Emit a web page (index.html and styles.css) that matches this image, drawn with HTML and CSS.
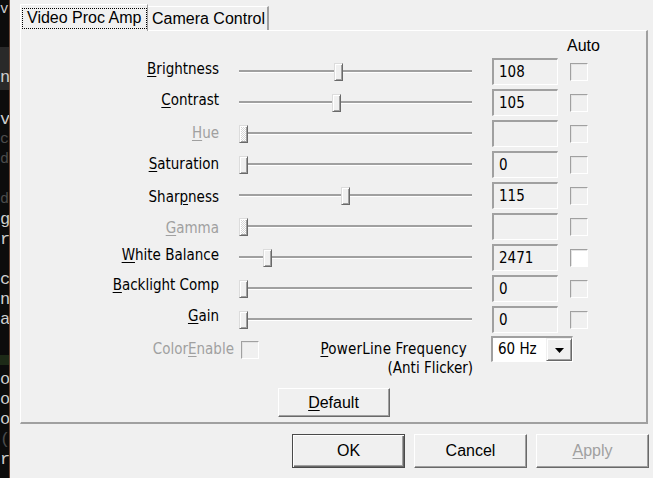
FILE: index.html
```html
<!DOCTYPE html>
<html>
<head>
<meta charset="utf-8">
<link rel="stylesheet" href="styles.css">
</head>
<body>
<div class="term">
  <div class="tl t1">vs</div>
  <div class="tl t2">&nbsp;E</div>
  <div class="band"><div class="tl dim">&nbsp;&nbsp;</div><div class="tl">nh</div></div>
  <div class="tl dim sm">&nbsp;S</div>
  <div class="tl">ve</div>
  <div class="tl dim sm">cc</div>
  <div class="tl dim sm">da</div>
  <div class="tl">&nbsp;W</div>
  <div class="tl dim sm">do</div>
  <div class="tl">gu</div>
  <div class="tl">ro</div>
  <div class="tl dim sm">&nbsp;e</div>
  <div class="tl">cs</div>
  <div class="tl">n.</div>
  <div class="tl">ab</div>
  <div class="tl dim sm">&nbsp;!</div>
  <div class="tl grn">&nbsp;</div>
  <div class="tl">oa</div>
  <div class="tl">o.</div>
  <div class="tl">o.</div>
  <div class="tl dim">(</div>
  <div class="tl">re</div>
</div>
<div class="dlg">
  <div class="tabs">
    <div class="tab sel"><span class="focus">Video Proc Amp</span></div>
    <div class="tab">Camera Control</div>
  </div>
  <div class="panel">
    <div class="grid">
      <div class="auto">Auto</div>

      <div class="lbl"><u>B</u>rightness</div>
      <div class="slider"><div class="track"></div><div class="thumb" style="left:114px"></div></div>
      <div class="val">108</div>
      <div class="cb"></div>

      <div class="lbl"><u>C</u>ontrast</div>
      <div class="slider"><div class="track"></div><div class="thumb" style="left:112px"></div></div>
      <div class="val">105</div>
      <div class="cb"></div>

      <div class="lbl dis low1"><u>H</u>ue</div>
      <div class="slider"><div class="track"></div><div class="thumb hatch" style="left:19px"></div></div>
      <div class="val"></div>
      <div class="cb"></div>

      <div class="lbl low1"><u>S</u>aturation</div>
      <div class="slider"><div class="track"></div><div class="thumb" style="left:19px"></div></div>
      <div class="val">0</div>
      <div class="cb"></div>

      <div class="lbl low2">Shar<u>p</u>ness</div>
      <div class="slider"><div class="track"></div><div class="thumb" style="left:121px"></div></div>
      <div class="val">115</div>
      <div class="cb"></div>

      <div class="lbl dis low2"><u>G</u>amma</div>
      <div class="slider"><div class="track"></div><div class="thumb hatch" style="left:19px"></div></div>
      <div class="val"></div>
      <div class="cb"></div>

      <div class="lbl"><u>W</u>hite Balance</div>
      <div class="slider"><div class="track"></div><div class="thumb" style="left:43px"></div></div>
      <div class="val">2471</div>
      <div class="cb on"></div>

      <div class="lbl high"><u>B</u>acklight Comp</div>
      <div class="slider"><div class="track"></div><div class="thumb" style="left:19px"></div></div>
      <div class="val">0</div>
      <div class="cb"></div>

      <div class="lbl high"><u>G</u>ain</div>
      <div class="slider"><div class="track"></div><div class="thumb" style="left:19px"></div></div>
      <div class="val">0</div>
      <div class="cb"></div>
    </div>

    <div class="extra">
      <div class="ce">
        <span class="celbl">Color<u>E</u>nable</span>
        <span class="cb2"></span>
      </div>
      <div class="pl">
        <span class="pl1"><u>P</u>owerLine Frequency</span>
        <span class="pl2">(Anti Flicker)</span>
      </div>
      <div class="combo">
        <span class="ctext">60 Hz</span>
        <span class="drop"><svg width="9" height="5" viewBox="0 0 9 5"><path d="M0 0H9L4.5 5Z" fill="#000"/></svg></span>
      </div>
    </div>

    <button class="btn def"><u>D</u>efault</button>
  </div>

  <div class="actions">
    <button class="btn ok">OK</button>
    <button class="btn">Cancel</button>
    <button class="btn dis"><u>A</u>pply</button>
  </div>
</div>
</body>
</html>
```
FILE: styles.css
```css
html, body {
  margin: 0;
  height: 478px;
  overflow: hidden;
}
body {
  background: #f0f0f0;
  display: flex;
  font-family: "Liberation Sans", Arial, sans-serif;
  font-size: 16px;
  color: #000;
}

/* terminal strip on the left */
.term {
  flex: none;
  width: 9px;
  border-right: 1px solid #6a4636;
  background: #0c0c0c;
  overflow: hidden;
  font-family: "Liberation Mono", monospace;
  font-size: 17px;
  line-height: 20px;
  color: #cfcfcf;
  white-space: nowrap;
}
.tl { height: 20px; }
.t1 { font-size: 14px; line-height: 18px; height: 22px; }
.t2 { color: #dfe6f0; height: 25px; line-height: 30px; }
.band { background: #292929; height: 43px; }
.band .tl { height: 21px; }
.dim { color: #4c4c4c; }
.sm { font-size: 15px; }
.grn { background: linear-gradient(#0c0c0c 0 5px, #1d2a17 5px 15px, #0c0c0c 15px); }

/* dialog */
.dlg {
  flex: 1;
  padding: 4px 0 0 10px;
  display: flex;
  flex-direction: column;
}
.tabs {
  display: flex;
  align-items: flex-end;
  height: 26px;
}
.tab {
  box-sizing: border-box;
  height: 24px;
  width: 121px;
  border-top: 1px solid #fff;
  border-right: 2px solid #a0a0a0;
  padding: 3px 0 0 4px;
  line-height: 18px;
  white-space: nowrap;
}
.tab.sel {
  width: 128px;
  height: 27px;
  margin-bottom: -1px;
  border-left: 1px solid #fff;
  border-right: 1px solid #a0a0a0;
  padding: 3px 0 2px 1px;
  position: relative;
  z-index: 1;
  background: #f0f0f0;
}
.focus {
  display: block;
  box-sizing: border-box;
  height: 21px;
  border: 1px dotted #000;
  padding: 0 0 0 4px;
  line-height: 17px;
}

.panel {
  box-sizing: border-box;
  width: 628px;
  border-top: 1px solid #fff;
  border-left: 1px solid #fff;
  border-right: 2px solid #a0a0a0;
  border-bottom: 2px solid #a0a0a0;
  padding-bottom: 5px;
  display: flex;
  flex-direction: column;
}

.grid {
  display: grid;
  grid-template-columns: 199px 272px 66px 30px;
  grid-template-rows: 23px;
  grid-auto-rows: 27px;
  row-gap: 4px;
}
.auto {
  grid-column: 4;
  align-self: end;
  margin-left: 9px;
  line-height: 17px;
  white-space: nowrap;
}
.lbl {
  grid-column: 1;
  align-self: center;
  text-align: right;
  padding: 0 1px 5px 0;
  line-height: 17px;
  font-size: 15px;
  white-space: nowrap;
  font-family: "DejaVu Sans Condensed", "Liberation Sans", sans-serif;
}
.lbl.low1 { padding-bottom: 1px; }
.lbl.low2 { padding-top: 3px; padding-bottom: 0; }
.lbl.high { padding-bottom: 7px; }
.dis { color: #a0a0a0; }
u { text-underline-offset: 2px; }

.slider {
  position: relative;
  display: flex;
  align-items: center;
}
.track {
  margin-left: 19px;
  width: 233px;
  height: 0;
  border-top: 2px solid #a0a0a0;
  border-bottom: 1px solid #fff;
}
.thumb {
  position: absolute;
  top: 5px;
  width: 9px;
  height: 18px;
  box-sizing: border-box;
  border: 1px solid;
  border-color: #dcdcdc #696969 #696969 #dcdcdc;
  box-shadow: inset 1px 1px #fff, inset -1px -1px #a0a0a0;
  background: #f0f0f0;
}
.thumb.hatch {
  background: repeating-conic-gradient(#fff 0 25%, #d6d6d6 0 50%) 0 0 / 2px 2px;
}

.val {
  box-sizing: border-box;
  width: 66px;
  height: 27px;
  border-style: solid;
  border-width: 2px 1px 1px 2px;
  border-color: #a0a0a0 #fff #fff #a0a0a0;
  padding-left: 5px;
  display: flex;
  align-items: center;
  font-size: 15px;
  font-family: "DejaVu Sans Condensed", "Liberation Sans", sans-serif;
}
.cb, .cb2 {
  box-sizing: border-box;
  width: 18px;
  height: 18px;
  border: 1px solid;
  border-color: #a0a0a0 #fff #fff #a0a0a0;
  box-shadow: inset 1px 1px #e3e3e3;
}
.cb {
  grid-column: 4;
  align-self: center;
  margin-left: 12px;
}
.cb.on { background: #fff; }

.extra {
  display: flex;
  margin-top: 3px;
  height: 42px;
  font-size: 15px;
  font-family: "DejaVu Sans Condensed", "Liberation Sans", sans-serif;
}
.ce {
  box-sizing: border-box;
  width: 239px;
  display: flex;
  justify-content: flex-end;
  align-items: flex-start;
  gap: 7px;
  padding-right: 1px;
}
.celbl {
  margin-top: 5px;
  line-height: 17px;
  color: #a0a0a0;
}
.cb2 { margin-top: 5px; }
.pl {
  width: 213px;
  text-align: right;
  padding-top: 4px;
  line-height: 19px;
}
.pl1 { display: block; padding-right: 6px; letter-spacing: 0.2px; }
.pl2 { display: block; }
.combo {
  box-sizing: border-box;
  margin-left: 18px;
  width: 82px;
  height: 26px;
  border-style: solid;
  border-width: 2px 1px 1px 2px;
  border-color: #a0a0a0 #fff #fff #a0a0a0;
  background: #fff;
  display: flex;
}
.ctext {
  flex: 1;
  padding-left: 5px;
  line-height: 23px;
}
.drop {
  box-sizing: border-box;
  width: 26px;
  height: 23px;
  background: #f0f0f0;
  border: 1px solid;
  border-color: #f0f0f0 #696969 #696969 #f0f0f0;
  box-shadow: inset 1px 1px #fff, inset -1px -1px #a0a0a0;
  display: flex;
  align-items: center;
  justify-content: center;
}
.drop svg { display: block; margin-top: 1px; }

.btn {
  box-sizing: border-box;
  width: 113px;
  height: 34px;
  padding: 0;
  background: #f0f0f0;
  border: 1px solid;
  border-color: #fff #696969 #696969 #fff;
  box-shadow: inset -1px -1px #a0a0a0;
  font-family: "Liberation Sans", Arial, sans-serif;
  font-size: 16px;
  color: #000;
}
.btn.def {
  width: 112px;
  height: 29px;
  margin: 10px auto 0;
}
.btn.ok {
  border: 1px solid #4a4a4a;
  box-shadow: inset 1px 1px #fff, inset -1px -1px #696969, inset -2px -2px #a0a0a0;
}
.btn.dis { color: #a0a0a0; }

.actions {
  display: flex;
  justify-content: flex-end;
  gap: 9px;
  padding-right: 4px;
  margin-top: 10px;
}
```
